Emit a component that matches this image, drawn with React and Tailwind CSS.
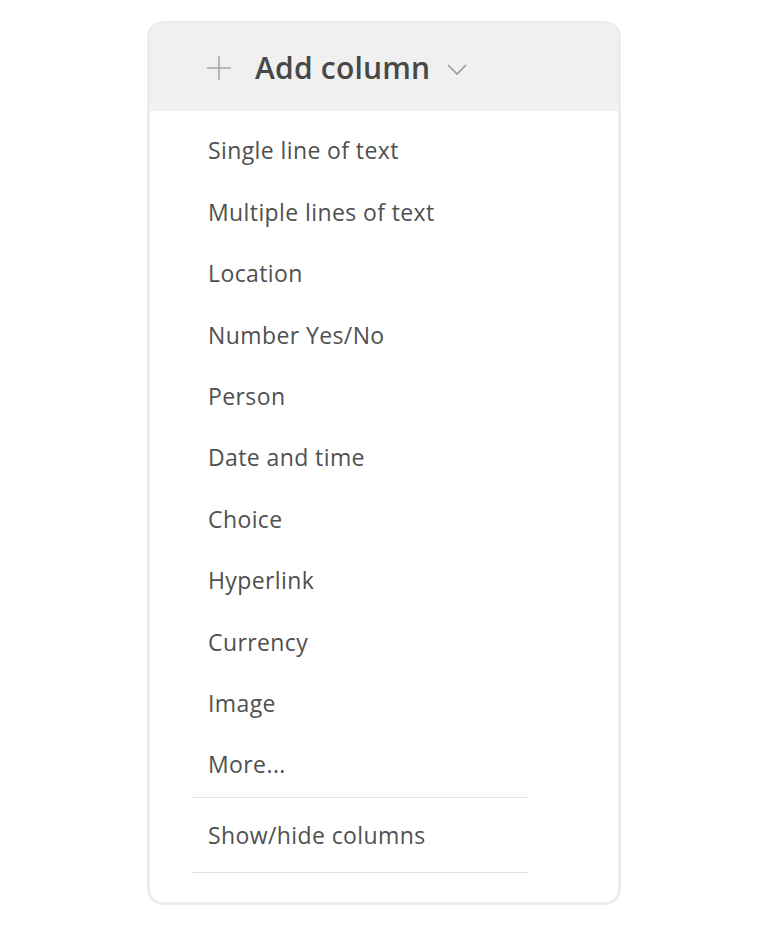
import React from "react";

const items = [
  "Single line of text",
  "Multiple lines of text",
  "Location",
  "Number Yes/No",
  "Person",
  "Date and time",
  "Choice",
  "Hyperlink",
  "Currency",
  "Image",
  "More...",
];

export default function App() {
  return (
    <div
      className="w-[768px] h-[934px] bg-white pt-[21px] pl-[147px]"
      style={{ fontFamily: '"Open Sans", "Noto Sans", sans-serif' }}
    >
      <div className="w-[474px] h-[884px] rounded-[16px] border-[3px] border-[#ececec] bg-white overflow-hidden flex flex-col">
        <div className="h-[87px] bg-[#f0f0f0] flex items-center pl-[57px] shrink-0">
          <svg width="24" height="24" viewBox="0 0 24 24" className="mr-[24px]">
            <path d="M12 0v24M0 12h24" stroke="#a6a6a6" strokeWidth="1.6" />
          </svg>
          <span className="text-[30px] font-semibold text-[#484848] leading-none tracking-[0.2px]">
            Add column
          </span>
          <svg width="20" height="12" viewBox="0 0 20 12" className="ml-[17px] mt-[4px]">
            <path d="M1 1l9 9 9-9" fill="none" stroke="#9a9a9a" strokeWidth="1.6" />
          </svg>
        </div>
        <div className="flex flex-col pt-[9px]">
          {items.map((t) => (
            <div
              key={t}
              className="h-[61.4px] flex items-center pl-[58px] text-[23px] tracking-[0.4px] text-[#505050]"
            >
              {t}
            </div>
          ))}
          <div className="ml-[42px] w-[336px] h-[1px] bg-[#e4e4e4] mt-[2px]" />
          <div className="h-[74px] flex items-center pl-[58px] text-[23px] tracking-[0.4px] text-[#505050]">
            Show/hide columns
          </div>
          <div className="ml-[42px] w-[336px] h-[1px] bg-[#e4e4e4]" />
        </div>
      </div>
    </div>
  );
}
